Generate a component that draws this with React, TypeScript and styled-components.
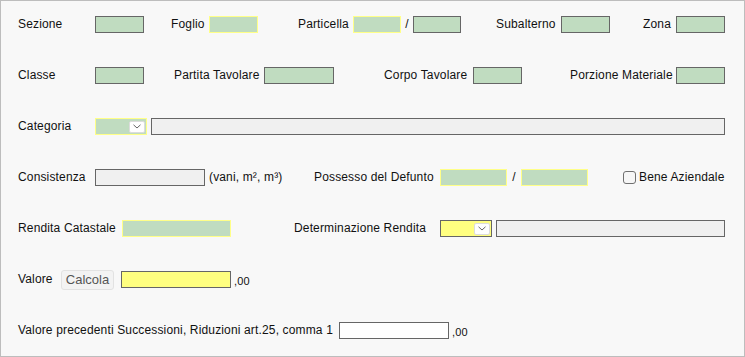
import React from "react";
import styled, { createGlobalStyle } from "styled-components";

const Global = createGlobalStyle`
  html, body { margin: 0; padding: 0; background: #ffffff; }
  * { box-sizing: border-box; }
`;

const Panel = styled.div`
  width: 745px;
  height: 357px;
  border: 1px solid #bdbdbd;
  background: #f8f8f8;
  padding: 15px 0 0 17px;
  display: flex;
  flex-direction: column;
  gap: 34px;
  font-family: "Liberation Sans", Arial, sans-serif;
  font-size: 12px;
  letter-spacing: 0.15px;
  color: #111;
`;

const Row = styled.div`
  display: flex;
  align-items: center;
  height: 17px;
`;

const Label = styled.span<{ $w?: number; $ml?: number; $center?: boolean }>`
  flex: none;
  width: ${(p) => (p.$w ? `${p.$w}px` : "auto")};
  margin-left: ${(p) => p.$ml ?? 0}px;
  text-align: ${(p) => (p.$center ? "center" : "left")};
  white-space: nowrap;
  line-height: 17px;
`;

type Variant = "green" | "greenY" | "gray" | "yellow" | "white";

const fills: Record<Variant, string> = {
  green: "#c0dcc0",
  greenY: "#c0dcc0",
  gray: "#f0f0f0",
  yellow: "#ffff80",
  white: "#ffffff",
};

const Field = styled.input<{ $w: number; $ml?: number; $v: Variant }>`
  flex: none;
  width: ${(p) => p.$w}px;
  height: 17px;
  margin: 0 0 0 ${(p) => p.$ml ?? 0}px;
  padding: 0 2px;
  border: 1px solid ${(p) => (p.$v === "greenY" ? "#ffff88" : "#666666")};
  background: ${(p) => fills[p.$v]};
  font: inherit;
  outline: none;
`;

const SelectBox = styled.div<{ $w: number; $ml?: number; $fill: string; $border: string }>`
  flex: none;
  width: ${(p) => p.$w}px;
  height: 17px;
  margin-left: ${(p) => p.$ml ?? 0}px;
  border: 1px solid ${(p) => p.$border};
  background: ${(p) => p.$fill};
  display: flex;
  align-items: center;
  justify-content: flex-end;
  padding-right: 1px;
`;

const DropButton = styled.span`
  width: 16px;
  height: 12px;
  background: #ffffff;
  border: 1px solid #dcdcdc;
  border-radius: 2px;
  display: flex;
  align-items: center;
  justify-content: center;
`;

const Chevron = () => (
  <svg width="8" height="5" viewBox="0 0 8 5">
    <path d="M0.5 0.8 L4 4 L7.5 0.8" fill="none" stroke="#666" strokeWidth="1" />
  </svg>
);

const CheckBox = styled.span<{ $ml?: number }>`
  flex: none;
  width: 13px;
  height: 13px;
  margin-left: ${(p) => p.$ml ?? 0}px;
  margin-right: 3px;
  border: 1px solid #707070;
  border-radius: 3px;
  background: #f6f6f6;
`;

const CalcButton = styled.button`
  flex: none;
  width: 53px;
  height: 20px;
  margin: 0;
  padding: 0;
  border: 1px solid #e2e2e2;
  border-radius: 3px;
  background: #f3f3f3;
  color: #555;
  font-family: "Liberation Sans", Arial, sans-serif;
  font-size: 13px;
  font-weight: normal;
  cursor: pointer;
`;

const Suffix = styled.span<{ $ml?: number }>`
  margin-left: ${(p) => p.$ml ?? 3}px;
  font-size: 11px;
  line-height: 17px;
  padding-top: 3px;
`;

const Select = ({ w, ml, fill, border }: { w: number; ml?: number; fill: string; border: string }) => (
  <SelectBox $w={w} $ml={ml} $fill={fill} $border={border}>
    <DropButton>
      <Chevron />
    </DropButton>
  </SelectBox>
);

export default function App() {
  return (
    <>
      <Global />
      <Panel>
        <Row>
          <Label $w={77}>Sezione</Label>
          <Field readOnly $w={49} $v="green" />
          <Label $ml={27} $w={38}>Foglio</Label>
          <Field readOnly $w={49} $v="greenY" />
          <Label $ml={40} $w={55}>Particella</Label>
          <Field readOnly $w={48} $v="greenY" />
          <Label $w={12} $center>/</Label>
          <Field readOnly $w={48} $v="green" />
          <Label $ml={35} $w={65}>Subalterno</Label>
          <Field readOnly $w={49} $v="green" />
          <Label $ml={33} $w={33}>Zona</Label>
          <Field readOnly $w={49} $v="green" />
        </Row>
        <Row>
          <Label $w={77}>Classe</Label>
          <Field readOnly $w={49} $v="green" />
          <Label $ml={30} $w={90}>Partita Tavolare</Label>
          <Field readOnly $w={70} $v="green" />
          <Label $ml={50} $w={89}>Corpo Tavolare</Label>
          <Field readOnly $w={49} $v="green" />
          <Label $ml={48} $w={106}>Porzione Materiale</Label>
          <Field readOnly $w={49} $v="green" />
        </Row>
        <Row>
          <Label $w={77}>Categoria</Label>
          <Select w={52} fill="#c0dcc0" border="#ffff88" />
          <Field readOnly $ml={4} $w={574} $v="gray" />
        </Row>
        <Row>
          <Label $w={77}>Consistenza</Label>
          <Field readOnly $w={110} $v="gray" />
          <Label $ml={4} $w={105}>(vani, m², m³)</Label>
          <Label $w={126}>Possesso del Defunto</Label>
          <Field readOnly $w={67} $v="greenY" />
          <Label $w={14} $center>/</Label>
          <Field readOnly $w={67} $v="greenY" />
          <CheckBox $ml={35} />
          <Label>Bene Aziendale</Label>
        </Row>
        <Row>
          <Label $w={104}>Rendita Catastale</Label>
          <Field readOnly $w={109} $v="greenY" />
          <Label $ml={63} $w={146}>Determinazione Rendita</Label>
          <Select w={52} fill="#ffff80" border="#666666" />
          <Field readOnly $ml={4} $w={229} $v="gray" />
        </Row>
        <Row>
          <Label $w={43}>Valore</Label>
          <CalcButton type="button">Calcola</CalcButton>
          <Field readOnly $ml={7} $w={110} $v="yellow" />
          <Suffix>,00</Suffix>
        </Row>
        <Row>
          <Label $w={321}>Valore precedenti Successioni, Riduzioni art.25, comma 1</Label>
          <Field readOnly $w={110} $v="white" />
          <Suffix>,00</Suffix>
        </Row>
      </Panel>
    </>
  );
}
